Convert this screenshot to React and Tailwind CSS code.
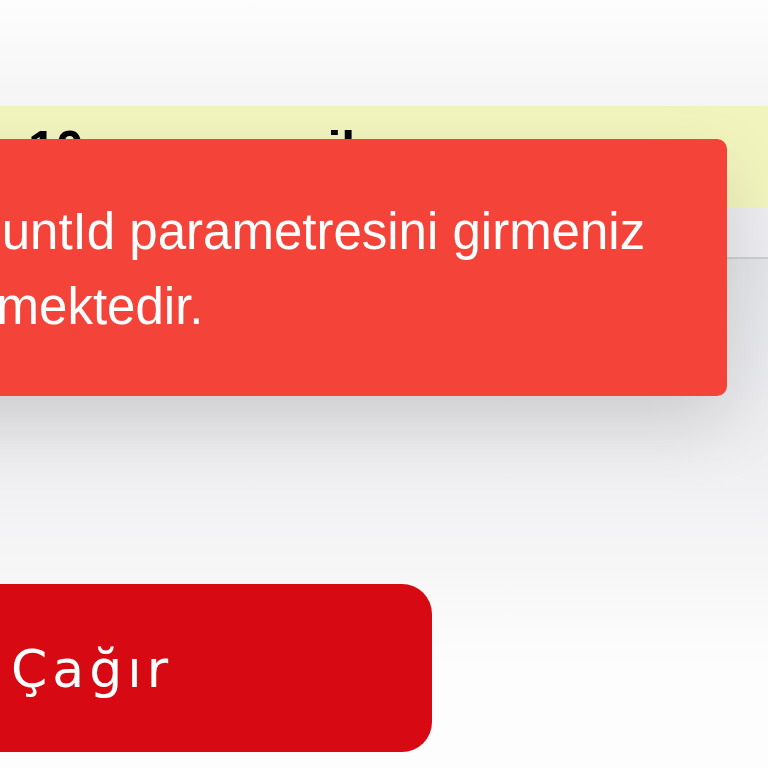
export default function App() {
  return (
    <div className="relative h-[768px] w-[768px] overflow-hidden bg-[#fcfcfc] font-['Liberation_Sans',Arial,sans-serif]">
      {/* top strip */}
      <div className="h-[106px] bg-gradient-to-b from-[#fdfdfd] to-[#f5f5f6]" />

      {/* yellow notice band, mostly hidden under the toast */}
      <div className="flex h-[102px] items-start overflow-hidden bg-[#f2f4be] pl-[28px] pt-[13px] text-[50px] font-bold leading-[60px] text-black">
        <span>10</span>
        <span className="ml-[38px]">s</span>
        <span className="ml-[178px]">il</span>
      </div>

      <div className="h-[51px] border-b-2 border-[#cdced4] bg-[#ededf1]" />

      <div className="bg-gradient-to-b from-[#e3e4e8] via-[#f1f1f3] via-45% to-[#fdfdfd] to-80% pt-[325px] pb-[16px]">
        <button className="ml-[-120px] flex h-[168px] w-[552px] items-center rounded-[30px] bg-[#d70a13] pl-[131px] pt-[2px] font-['DejaVu_Sans',sans-serif] text-[52px] tracking-[5px] text-white">
          Çağır
        </button>
      </div>

      {/* error toast */}
      <div className="absolute top-[139px] left-[-200px] right-[41px] h-[257px] rounded-[10px] bg-[#f4443a] pt-[55px] pl-[69px] shadow-[0_30px_70px_rgba(0,0,0,0.13)]">
        <p className="whitespace-nowrap indent-[25px] text-[51px] leading-[75px] text-white">
          accountId parametresini girmeniz
          <br />
          gerekmektedir.
        </p>
      </div>
    </div>
  )
}
